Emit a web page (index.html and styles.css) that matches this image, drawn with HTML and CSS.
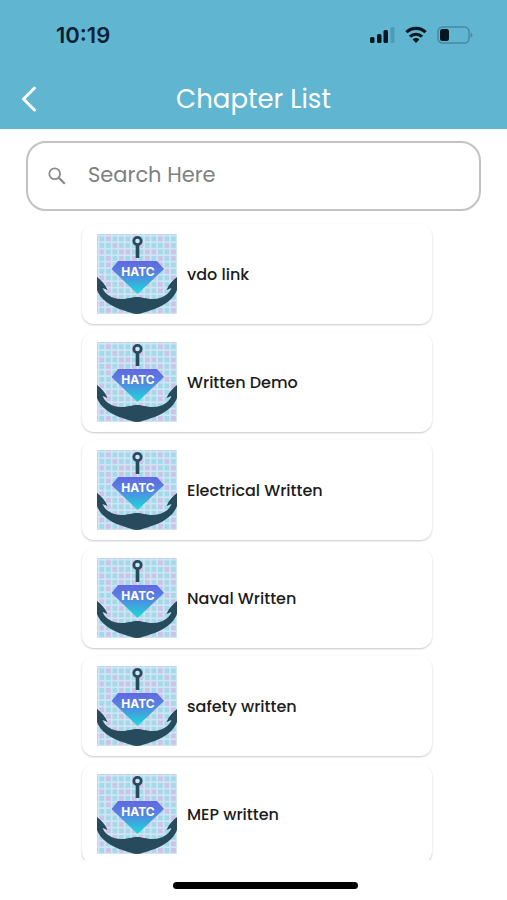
FILE: index.html
```html
<!DOCTYPE html>
<html lang="en">
<head>
    <meta charset="UTF-8">
    <meta name="viewport" content="width=device-width, initial-scale=1.0">
    <title>Chapter List</title>
    <link rel="stylesheet" href="styles.css">
</head>
<body>
    <!-- shared logo artwork -->
    <svg class="defs" width="0" height="0" aria-hidden="true">
        <defs>
            <linearGradient id="gem" x1="0" y1="0" x2="0" y2="1">
                <stop offset="0" stop-color="#6267e2"/>
                <stop offset="0.4" stop-color="#5585e0"/>
                <stop offset="1" stop-color="#18dcd8"/>
            </linearGradient>
            <pattern id="grid" x="2" y="2" width="26" height="26" patternUnits="userSpaceOnUse">
                <g fill="#a3d9e9">
                    <rect x="0.5" y="0.5" width="4.8" height="4.8"/>
                    <rect x="13.5" y="0.5" width="4.8" height="4.8"/>
                    <rect x="20" y="0.5" width="4.8" height="4.8"/>
                    <rect x="0.5" y="7" width="4.8" height="4.8"/>
                    <rect x="7" y="7" width="4.8" height="4.8"/>
                    <rect x="20" y="7" width="4.8" height="4.8"/>
                    <rect x="7" y="13.5" width="4.8" height="4.8"/>
                    <rect x="13.5" y="13.5" width="4.8" height="4.8"/>
                    <rect x="0.5" y="20" width="4.8" height="4.8"/>
                    <rect x="13.5" y="20" width="4.8" height="4.8"/>
                </g>
                <g fill="#cbc3e8">
                    <rect x="7" y="0.5" width="4.8" height="4.8"/>
                    <rect x="13.5" y="7" width="4.8" height="4.8"/>
                    <rect x="0.5" y="13.5" width="4.8" height="4.8"/>
                    <rect x="20" y="13.5" width="4.8" height="4.8"/>
                    <rect x="7" y="20" width="4.8" height="4.8"/>
                    <rect x="20" y="20" width="4.8" height="4.8"/>
                </g>
            </pattern>
            <symbol id="logo" viewBox="0 0 80 80">
                <rect width="80" height="80" fill="#cfe5f3"/>
                <rect width="80" height="80" fill="url(#grid)"/>
                <circle cx="40.5" cy="7" r="3.7" fill="#cfe5f3" stroke="#274b5d" stroke-width="2.8"/>
                <path d="M40.5 11v13" stroke="#274b5d" stroke-width="3.6"/>
                <path d="M21 27h39l7 8-26.5 25L14.500 35z" fill="url(#gem)"/>
                <path d="M0 43C4 46 8 50 10.500 56L5.500 54C8 60 14 64.500 24 65C31 65 35 63 40 63S49 65 56 65C66 64.500 72 60 74.500 54L69.500 56C72 50 76 46 80 43V56C77 65 66 73 53 76.500C48 78 44 80 40 80S32 78 27 76.500C14 73 3 65 0 56Z" fill="#274b5d"/>
                <text class="logo-text" x="41" y="42" text-anchor="middle">HATC</text>
            </symbol>
        </defs>
    </svg>

    <header class="header">
        <div class="status">
            <span class="time">10:19</span>
            <div class="status-icons">
                <svg width="26" height="18" viewBox="0 0 26 18">
                    <rect x="1" y="11" width="4.500" height="6" rx="1.5" fill="#061621"/>
                    <rect x="8" y="8" width="4.500" height="9" rx="1.5" fill="#061621"/>
                    <rect x="14.500" y="4" width="4.500" height="13" rx="1.5" fill="#061621"/>
                    <rect x="21.500" y="1" width="4" height="16" rx="1.5" fill="#4e9bb5"/>
                </svg>
                <svg width="22" height="18" viewBox="0 0 22 18" fill="none" stroke="#061621" stroke-width="3.2">
                    <path d="M1.4 6.200a13.8 13.8 0 0 1 19.2 0"/>
                    <path d="M5 10.7a8.6 8.6 0 0 1 12 0"/>
                    <path d="M11 17l-3.4-3.6a4.800 4.800 0 0 1 6.800 0z" fill="#061621" stroke="none"/>
                </svg>
                <svg width="36" height="18" viewBox="0 0 36 18">
                    <rect x="1" y="1" width="31" height="16" rx="4.5" fill="none" stroke="#458ba4" stroke-width="1.5"/>
                    <rect x="3" y="3" width="9" height="12" rx="2.5" fill="#061621"/>
                    <path d="M33.5 6.5c2.6 1 2.6 4 0 5z" fill="#458ba4"/>
                </svg>
            </div>
        </div>
        <div class="bar">
            <button class="back" type="button" aria-label="Back">
                <svg width="16" height="26" viewBox="0 0 16 26" fill="none" stroke="#fff" stroke-width="3" stroke-linecap="round" stroke-linejoin="round">
                    <path d="M13.5 2L2.5 13l11 11"/>
                </svg>
            </button>
            <h1 class="title">Chapter List</h1>
        </div>
    </header>

    <label class="search">
        <svg width="18" height="18" viewBox="0 0 18 18" fill="none" stroke="#8c8c8c" stroke-width="1.800">
            <circle cx="6.7" cy="6.7" r="5.4"/>
            <path d="M10.6 10.6l6.2 6.2" stroke-width="2.2"/>
        </svg>
        <input class="search-input" type="text" placeholder="Search Here" aria-label="Search Here">
    </label>

    <ul class="list">
        <li><a class="card" href="#"><svg class="logo"><use href="#logo"/></svg><span>vdo link</span></a></li>
        <li><a class="card" href="#"><svg class="logo"><use href="#logo"/></svg><span>Written Demo</span></a></li>
        <li><a class="card" href="#"><svg class="logo"><use href="#logo"/></svg><span>Electrical Written</span></a></li>
        <li><a class="card" href="#"><svg class="logo"><use href="#logo"/></svg><span>Naval Written</span></a></li>
        <li><a class="card" href="#"><svg class="logo"><use href="#logo"/></svg><span>safety written</span></a></li>
        <li><a class="card" href="#"><svg class="logo"><use href="#logo"/></svg><span>MEP written</span></a></li>
    </ul>

    <footer class="home">
        <div class="home-bar"></div>
    </footer>
</body>
</html>
```
FILE: styles.css
```css
* {
    box-sizing: border-box;
}

body {
    margin: 0;
    height: 100vh;
    display: flex;
    flex-direction: column;
    overflow: hidden;
    background-color: #fff;
    font-family: Poppins, Inter, sans-serif;
    color: #1c1c1c;
}

.defs {
    position: absolute;
}

/* header */
.header {
    flex: none;
    background-color: #60b5d0;
}

.status {
    display: flex;
    justify-content: space-between;
    align-items: center;
    height: 69px;
    padding: 0 34px 0 56px;
}

.time {
    font-family: Inter, sans-serif;
    font-size: 22px;
    font-weight: 600;
    color: #0a2033;
}

.status-icons {
    display: flex;
    gap: 10px;
}

.bar {
    display: grid;
    grid-template-columns: 40px 1fr 40px;
    align-items: center;
    height: 60px;
}

.back {
    display: flex;
    justify-content: flex-end;
    padding: 0 3px 0 0;
    border: none;
    background: none;
}

.title {
    margin: 0;
    font-size: 26px;
    font-weight: 400;
    text-align: center;
    color: #fff;
}

/* search box */
.search {
    flex: none;
    display: flex;
    align-items: center;
    gap: 22px;
    height: 70px;
    margin: 12px 26px 0;
    padding: 0 20px;
    border: 2px solid #c2c2c2;
    border-radius: 20px;
}

.search-input {
    flex: 1;
    min-width: 0;
    padding: 0 0 3px;
    border: none;
    outline: none;
    background: none;
    font-family: inherit;
    font-size: 21px;
}

.search-input::placeholder {
    color: #808080;
}

/* chapters */
.list {
    flex: 1;
    min-height: 0;
    display: flex;
    flex-direction: column;
    gap: 8px;
    margin: 0;
    padding: 13px 75px 0 82px;
    list-style: none;
    overflow: hidden;
}

.card {
    display: flex;
    align-items: center;
    gap: 10px;
    height: 100px;
    padding: 0 15px;
    border-radius: 12px;
    box-shadow: 0 1px 2px rgba(0, 0, 0, 0.22);
    font-size: 16px;
    font-weight: 500;
    color: #1c1c1c;
    text-decoration: none;
}

.logo {
    flex: none;
    width: 80px;
    height: 80px;
}

.logo-text {
    font-family: Inter, sans-serif;
    font-size: 12px;
    font-weight: 700;
    fill: #fff;
}

.home {
    flex: none;
    display: flex;
    justify-content: center;
    height: 40px;
    padding: 22px 0 0 24px;
}

.home-bar {
    width: 185px;
    height: 7px;
    border-radius: 4px;
    background-color: #000;
}
```
